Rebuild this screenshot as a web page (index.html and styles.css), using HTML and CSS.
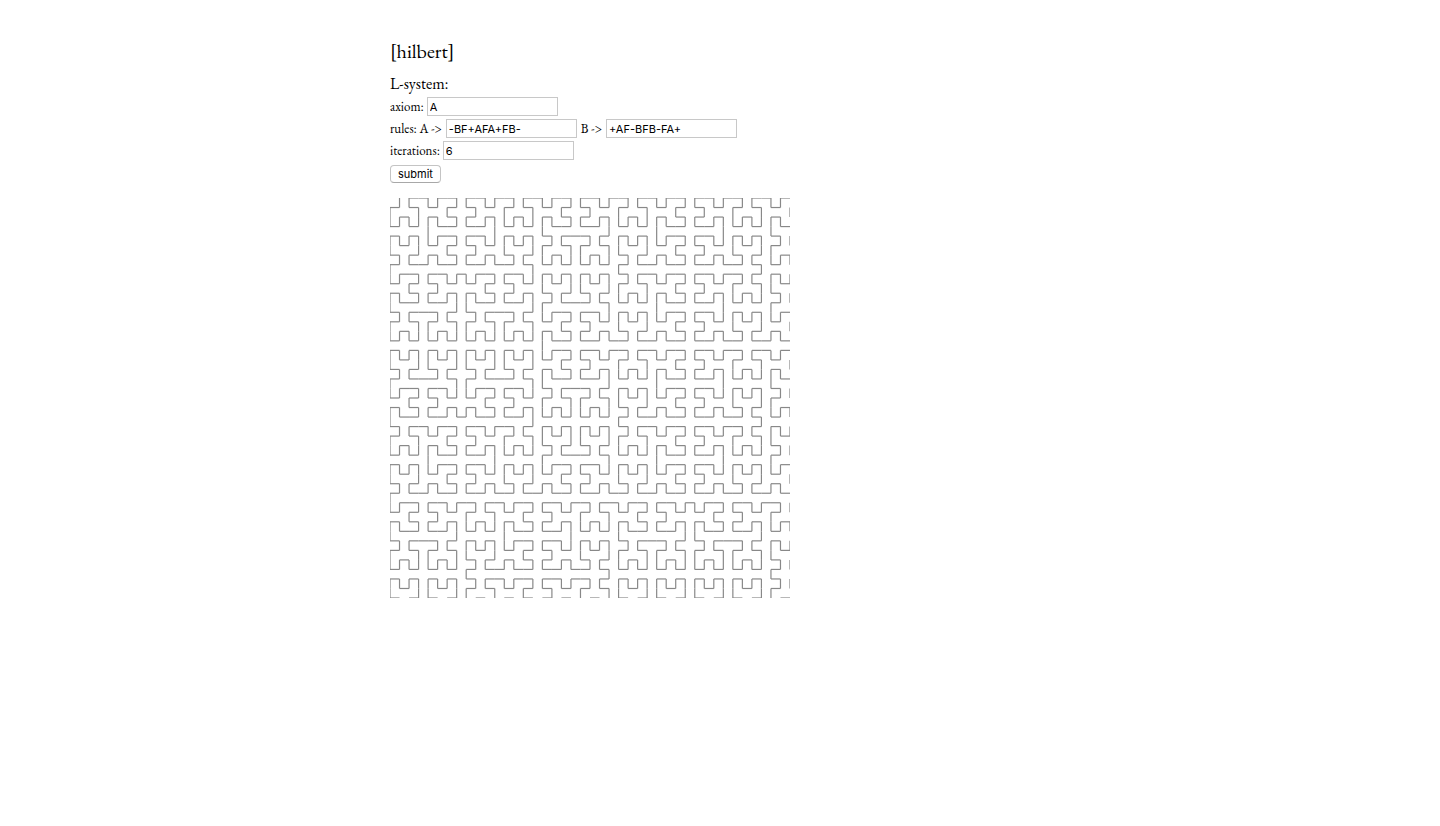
FILE: index.html
```html
<!DOCTYPE html>
<html lang="en">
<head>
<meta charset="utf-8">
<meta name="viewport" content="width=device-width, initial-scale=1">
<title>hilbert</title>
<link rel="stylesheet" href="styles.css">
</head>
<body>
<main class="page">
  <h1 class="title">[hilbert]</h1>
  <form class="system" id="system">
    <h2 class="subtitle">L-system:</h2>
    <div class="row">
      <label for="axiom">axiom:</label>
      <input class="field" id="axiom" type="text" value="A">
    </div>
    <div class="row row-rules">
      <label for="rule-a">rules: A -&gt;</label>
      <input class="field" id="rule-a" type="text" value="-BF+AFA+FB-">
      <label for="rule-b">B -&gt;</label>
      <input class="field" id="rule-b" type="text" value="+AF-BFB-FA+">
    </div>
    <div class="row">
      <label for="iterations">iterations:</label>
      <input class="field" id="iterations" type="text" value="6">
    </div>
    <button class="submit" type="submit">submit</button>
  </form>
  <canvas class="plot" id="plot" width="400" height="400"></canvas>
</main>
<script src="script.js"></script>
</body>
</html>
```
FILE: styles.css
```css
body {
  margin: 0;
  background: #fff;
  color: #000;
  font-family: "EB Garamond", "Liberation Serif", serif;
  font-size: 13px;
}

.page {
  box-sizing: border-box;
  max-width: 660px;
  margin: 0 auto;
  padding-top: 39px;
}

.title {
  margin: 0 0 11px;
  font-size: 20px;
  font-weight: 400;
  line-height: 24px;
}

.system {
  display: flex;
  flex-direction: column;
  align-items: flex-start;
  gap: 3px;
}

.subtitle {
  margin: 0;
  font-size: 16px;
  font-weight: 400;
  line-height: 20px;
}

.row {
  display: flex;
  flex-wrap: wrap;
  align-items: center;
  gap: 3px;
}

.row-rules {
  column-gap: 4px;
}

.field {
  box-sizing: border-box;
  width: 131px;
  height: 19px;
  margin: 0;
  padding: 1px 2px;
  border: 1px solid #c8c8c8;
  background: #fff;
  color: #000;
  font: 11px/15px Inter, sans-serif;
}

.submit {
  height: 18px;
  margin: 2px 0 15px;
  padding: 0 7px;
  border: 1px solid #c4c4c4;
  border-bottom-color: #a8a8a8;
  border-radius: 4px;
  background: #fff;
  color: #000;
  font: 11px/14px Inter, sans-serif;
}

.plot {
  display: block;
}
```
FILE: script.js
```js
const CURVE_SIZE = 600;
const canvas = document.getElementById("plot");
const ctx = canvas.getContext("2d");
const valueOf = (id) => document.getElementById(id).value;

function expand(axiom, rules, iterations) {
  let text = axiom;
  for (let i = 0; i < iterations; i++) {
    text = text.replace(/[AB]/g, (symbol) => rules[symbol]);
  }
  return text;
}

function draw() {
  const iterations = Number(valueOf("iterations"));
  const rules = { A: valueOf("rule-a"), B: valueOf("rule-b") };
  const path = expand(valueOf("axiom"), rules, iterations);
  const step = CURVE_SIZE / (2 ** iterations - 1);
  let x = 0, y = 0, dx = 0, dy = 1;
  let started = false;

  // An even order starts along the x axis.
  if (iterations % 2 === 0) {
    [dx, dy] = [1, 0];
  }
  ctx.clearRect(0, 0, canvas.width, canvas.height);
  ctx.strokeStyle = "#888";
  ctx.lineWidth = 1.2;
  for (const symbol of path) {
    if (symbol === "-") {
      [dx, dy] = [-dy, dx];
    } else if (symbol === "+") {
      [dx, dy] = [dy, -dx];
    } else if (symbol === "F") {
      const nx = x + dx, ny = y + dy;
      if (started) {
        ctx.beginPath();
        ctx.moveTo(x * step, y * step);
        ctx.lineTo(nx * step, ny * step);
        ctx.stroke();
      }
      started = true;
      x = nx;
      y = ny;
    }
  }
}

document.getElementById("system").addEventListener("submit", (event) => {
  event.preventDefault();
  draw();
});
draw();
```
